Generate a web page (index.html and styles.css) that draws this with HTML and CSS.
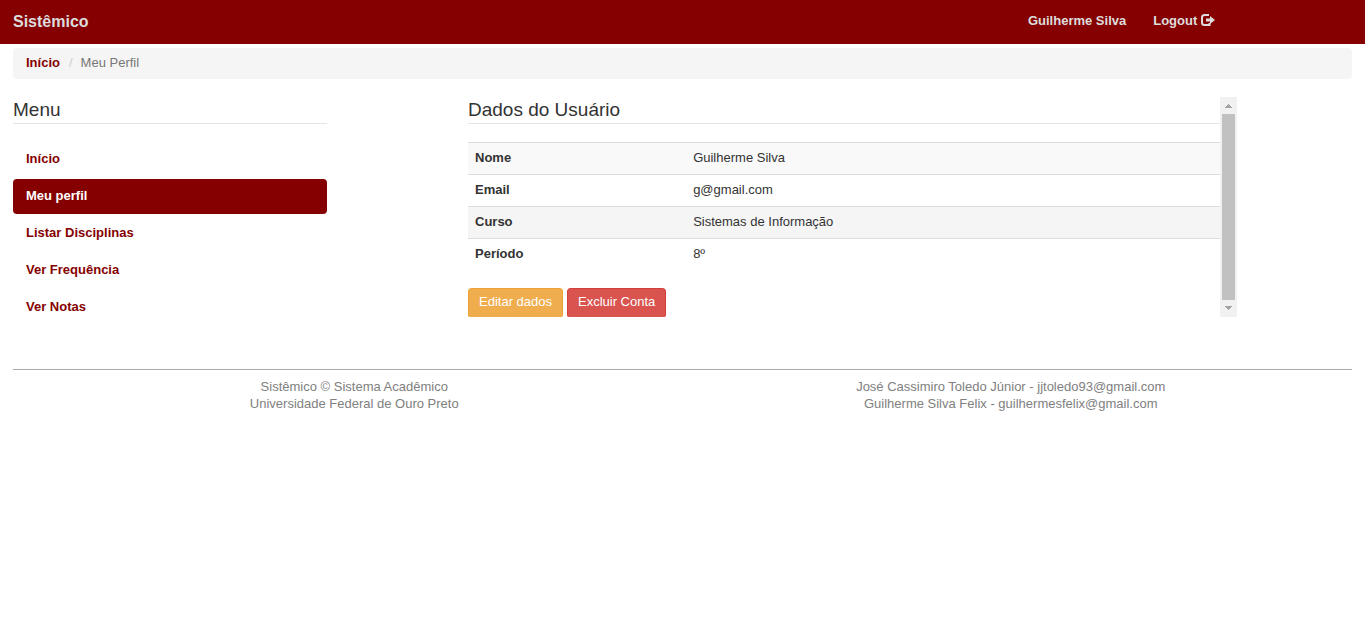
FILE: index.html
```html
<!DOCTYPE html>
<html lang="pt-BR">
<head>
<meta charset="utf-8">
<meta name="viewport" content="width=device-width, initial-scale=1">
<title>Sistêmico - Meu Perfil</title>
<link rel="stylesheet" href="styles.css">
</head>
<body>
<header class="navbar">
  <a class="brand" href="#">Sistêmico</a>
  <nav class="navbar-links">
    <a href="#">Guilherme Silva</a>
    <a href="#">Logout <svg class="icon" viewBox="0 0 14 12" aria-hidden="true"><path d="M8 1H3.500Q1 1 1 3.500v5Q1 11 3.500 11H8.500V9" fill="none" stroke="currentColor" stroke-width="2"/><path d="M5 4.500h4V2L14 6l-5 4V7.500H5z" fill="currentColor"/></svg></a>
  </nav>
</header>
<ol class="breadcrumb">
  <li><a href="#">Início</a></li>
  <li>Meu Perfil</li>
</ol>
<main class="layout">
  <aside class="sidebar">
    <h2 class="title">Menu</h2>
    <nav class="menu">
      <a href="#">Início</a>
      <a class="active" href="#">Meu perfil</a>
      <a href="#">Listar Disciplinas</a>
      <a href="#">Ver Frequência</a>
      <a href="#">Ver Notas</a>
    </nav>
  </aside>
  <section class="panel">
    <div class="panel-body">
      <h2 class="title">Dados do Usuário</h2>
      <table class="data">
        <tbody>
          <tr><th scope="row">Nome</th><td>Guilherme Silva</td></tr>
          <tr><th scope="row">Email</th><td>g@gmail.com</td></tr>
          <tr class="hovered"><th scope="row">Curso</th><td>Sistemas de Informação</td></tr>
          <tr><th scope="row">Período</th><td>8º</td></tr>
        </tbody>
      </table>
      <div class="actions">
        <button class="btn btn-warning" type="button">Editar dados</button>
        <button class="btn btn-danger" type="button">Excluir Conta</button>
      </div>
    </div>
    <div class="scrollbar" aria-hidden="true">
      <svg class="arrow" viewBox="0 0 17 17"><path d="M8 7h1v1h1v1h1v1h1v1H5v-1h1V9h1V8h1z"/></svg>
      <div class="thumb"></div>
      <svg class="arrow" viewBox="0 0 17 17"><path d="M5 6h7v1h-1v1h-1v1H9v1H8V9H7V8H6V7H5z"/></svg>
    </div>
  </section>
</main>
<footer class="footer">
  <p>Sistêmico © Sistema Acadêmico<br>Universidade Federal de Ouro Preto</p>
  <p>José Cassimiro Toledo Júnior - jjtoledo93@gmail.com<br>Guilherme Silva Felix - guilhermesfelix@gmail.com</p>
</footer>
</body>
</html>
```
FILE: styles.css
```css
* { box-sizing: border-box; }
body {
  margin: 0;
  background: #fff;
  color: #333;
  font: 13px/17px "Liberation Sans", Arial, sans-serif;
}
a { color: #850000; font-weight: bold; text-decoration: none; }

.navbar {
  display: flex;
  justify-content: space-between;
  align-items: center;
  min-height: 44px;
  padding: 0 11% 2px 13px;
  background: #850000;
}
.navbar a { color: #ddd; }
.navbar .brand { font-size: 16px; }
.navbar-links { display: flex; gap: 27px; padding-bottom: 2px; }
.icon { width: 14px; height: 12px; vertical-align: -1px; }

.breadcrumb {
  display: flex;
  margin: 4px 13px 18px;
  padding: 6px 13px 8px;
  border-radius: 4px;
  background: #f5f5f5;
  color: #777;
  list-style: none;
}
.breadcrumb li + li::before { content: "/"; padding: 0 8px 0 9px; color: #ccc; }

.layout {
  display: grid;
  grid-template-columns: repeat(12, minmax(0, 1fr));
  align-items: start;
}
.sidebar { grid-column: span 3; padding: 0 14px 0 13px; }
.panel {
  grid-column: 5 / span 7;
  display: flex;
  align-items: stretch;
  padding: 0 14px 0 13px;
}
.panel-body { flex: 1; }
.title {
  margin: 0 0 18px;
  padding: 2px 0;
  border-bottom: 1px solid #e5e5e5;
  font-size: 19px;
  font-weight: normal;
  line-height: 22px;
}

.menu { display: grid; gap: 2px; }
.menu a { padding: 8px 13px 10px; border-radius: 4px; }
.menu .active { background: #850000; color: #fff; }

.data { width: 100%; border-collapse: collapse; }
.data th, .data td {
  padding: 6px 7px 8px;
  border-top: 1px solid #ddd;
  text-align: left;
}
.data th { width: 29%; }
.data tr:nth-child(odd) { background: #f9f9f9; }
.data .hovered.hovered { background: #f5f5f5; }

.actions { display: flex; gap: 4px; margin-top: 18px; }
.btn {
  padding: 4px 10px 7px;
  border: 1px solid;
  border-bottom: 0;
  border-radius: 4px 4px 2px 2px;
  color: #fff;
  font: inherit;
}
.btn-warning { background: #f0ad4e; border-color: #eea236; }
.btn-danger { background: #d9534f; border-color: #d43f3a; }

.scrollbar {
  display: flex;
  flex-direction: column;
  width: 17px;
  background: #f1f1f1;
}
.arrow { width: 17px; height: 17px; fill: #a3a3a3; }
.thumb { flex: 1; margin: 0 2px; background: #c1c1c1; }

.footer {
  display: grid;
  grid-template-columns: 1fr 1fr;
  margin: 44px 13px 0;
  padding: 8px 13px;
  border-top: 1px solid #aaa;
  color: #808080;
  text-align: center;
}
.footer p { margin: 0; }
```
